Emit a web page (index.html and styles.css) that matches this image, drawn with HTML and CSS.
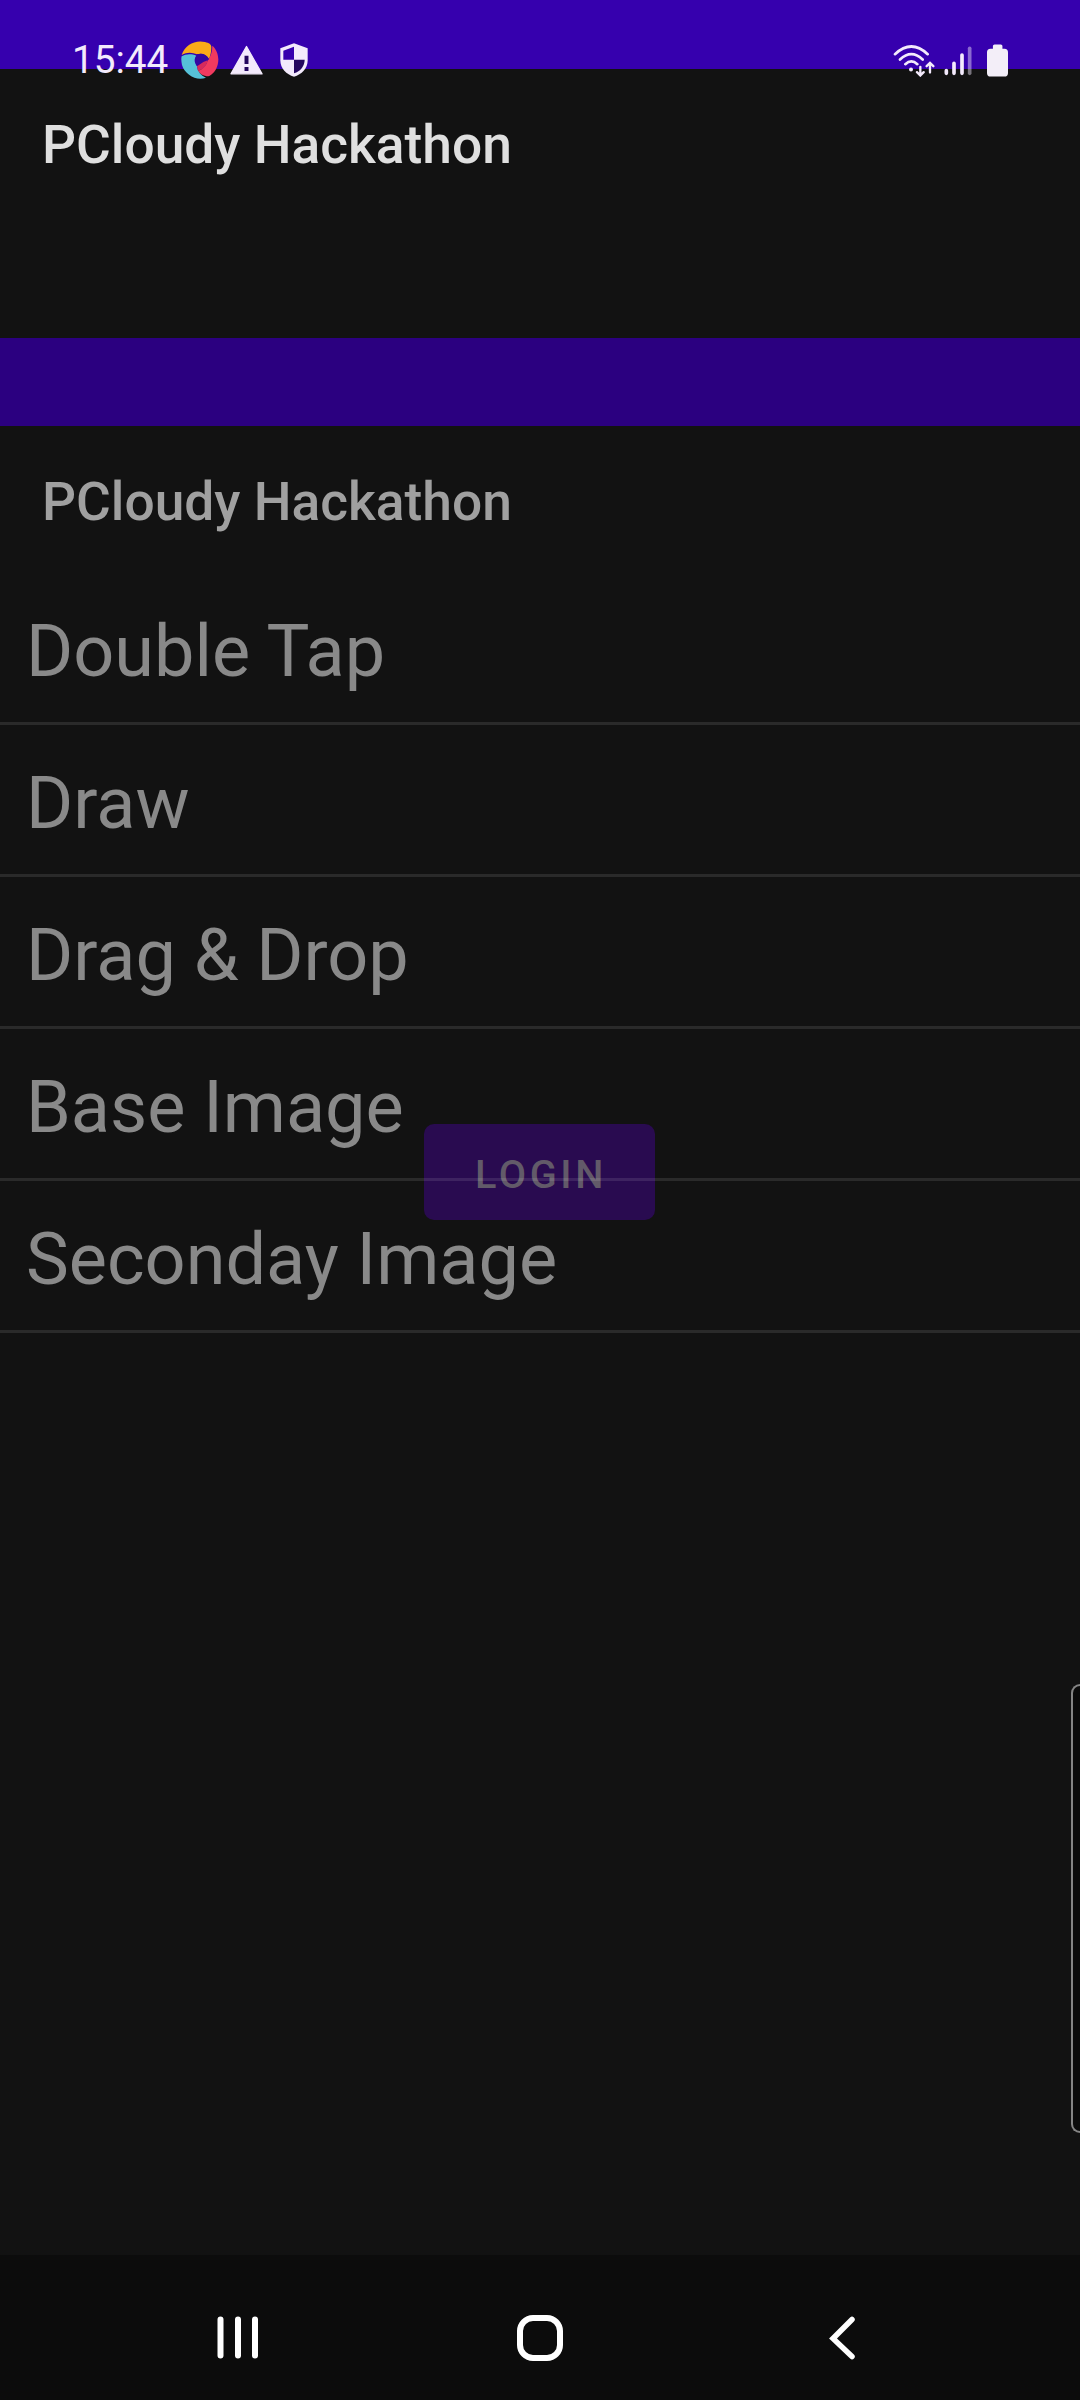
FILE: index.html
```html
<!DOCTYPE html>
<html lang="en">
<head>
<meta charset="utf-8">
<title>PCloudy Hackathon</title>
<link rel="stylesheet" href="styles.css">
</head>
<body>
<div class="screen">
  <div class="status-bar">
    <div class="status-left">
      <span class="clock">15:44</span>
      <svg class="icon-swirl" viewBox="0 0 114 114">
        <path d="M2 42C12 12 42-4 72 3C84 6 91 10 91 18C91 32 89 42 84 54C74 38 62 36 48 40C32 33 16 34 2 42Z" fill="#fbab19"/>
        <path d="M94 14C113 30 118 62 104 86C96 98 86 107 77 106C66 104 56 98 51 90C66 84 76 74 80 58C90 46 94 30 94 14Z" fill="#f03a5f"/>
        <path d="M2 46C14 38 32 38 46 44C38 54 40 66 48 76C50 92 60 104 75 110C47 121 12 102 3 72C1 61 0 53 2 46Z" fill="#56c1d8"/>
        <path d="M48 40C62 36 74 38 84 54L80 59Q65 62 48 76Q38 58 48 40Z" fill="#3408a0"/>
        <path d="M80 58Q64 62 48 76L51 90C66 85 77 75 80 58Z" fill="#d62a5c"/>
      </svg>
      <svg class="icon-warning" viewBox="0 0 100 90">
        <path d="M50 4L97 87H3Z" fill="#f3eafc" stroke="#f3eafc" stroke-width="4" stroke-linejoin="round"/>
        <path d="M44 32h12v25H44zM44 66h12v12H44z" fill="#24075f"/>
      </svg>
      <svg class="icon-shield" viewBox="0 0 84 102">
        <path d="M42 1L83 16V52C83 76 65 95 42 101C19 95 1 76 1 52V16Z" fill="#f3eafc"/>
        <path d="M42 11V50H10V23Z" fill="#3700ae"/>
        <path d="M42 50H74C74 69 61 85 42 91Z" fill="#24075f"/>
      </svg>
    </div>
    <div class="status-right">
      <svg class="icon-wifi" viewBox="0 0 126 98" fill="none" stroke="#f3eafc" stroke-width="8" stroke-linecap="round">
        <path d="M6 30Q55-16 104 30M21 46Q55 14 89 46M37 60Q55 43 73 60"/>
        <circle cx="54" cy="76" r="6" fill="#f3eafc" stroke="none"/>
        <path d="M82 68V92M72 84L82 94L92 84M111 85V58M101 66L111 56L121 66" stroke-width="7"/>
      </svg>
      <svg class="icon-signal" viewBox="0 0 84 90" stroke="#f3eafc" stroke-width="11" stroke-linecap="round">
        <path d="M7 74V82M30 52V82M54 27V82"/>
        <path d="M77 7V82" opacity=".45"/>
      </svg>
      <svg class="icon-battery" viewBox="0 0 64 100" fill="#f3eef8">
        <rect x="18" y="1" width="29" height="24" rx="5"/>
        <rect x="0" y="14" width="64" height="85" rx="11"/>
      </svg>
    </div>
  </div>

  <header class="app-bar">PCloudy Hackathon</header>
  <div class="inner-status"></div>
  <header class="app-bar app-bar-faded">PCloudy Hackathon</header>

  <main class="content">
    <button class="login">LOGIN</button>
    <ul class="menu">
      <li>Double Tap</li>
      <li>Draw</li>
      <li>Drag &amp; Drop</li>
      <li>Base Image</li>
      <li>Seconday Image</li>
    </ul>
  </main>

  <div class="edge-handle"></div>

  <nav class="nav-bar">
    <svg viewBox="0 0 48 48" stroke="#fff" stroke-width="6" stroke-linecap="round">
      <path d="M6.5 5.5V41.5M24 5.5V41.5M41 5.5V41.5"/>
    </svg>
    <svg viewBox="0 0 48 48" fill="none" stroke="#fff" stroke-width="6">
      <rect x="4" y="4" width="40" height="40" rx="13"/>
    </svg>
    <svg viewBox="0 0 48 48" fill="none" stroke="#fff" stroke-width="5.5" stroke-linecap="round">
      <path d="M34 5.5L15 24.5L34 42.5"/>
    </svg>
  </nav>
</div>
</body>
</html>
```
FILE: styles.css
```css
* { box-sizing: border-box; }

body {
  margin: 0;
  background: #121212;
  font-family: Roboto, "Liberation Sans", sans-serif;
}

.screen {
  position: relative;
  display: flex;
  flex-direction: column;
  width: 1080px;
  height: 2400px;
  overflow: hidden;
  background: #121212;
}

/* The status icons hang a few pixels below the coloured band. */
.status-bar {
  display: flex;
  flex: none;
  justify-content: space-between;
  align-items: flex-start;
  height: 69px;
  padding: 41px 72px 0 72px;
  background: #3600ae;
}

.status-left,
.status-right {
  display: flex;
  align-items: center;
  height: 38px;
}

.clock {
  width: 109px;
  font-size: 38.7px;
  line-height: 38px;
  color: #f3eafc;
}

.icon-swirl { width: 38px; height: 38px; }
.icon-warning { width: 33px; height: 30px; margin-left: 11px; }
.icon-shield { width: 28px; height: 34px; margin-left: 17px; }
.icon-wifi { width: 42px; height: 33px; }
.icon-signal { width: 28px; height: 30px; margin: 2px 0 0 9px; }
.icon-battery { width: 21px; height: 33px; margin-left: 15px; }

.app-bar {
  display: flex;
  flex: none;
  align-items: center;
  height: 147px;
  margin-bottom: 122px;
  padding: 4px 42px 0;
  font-size: 53.3px;
  line-height: 62px;
  font-weight: 500;
  color: #dfdfdf;
}

.inner-status {
  flex: none;
  height: 88px;
  background: #2b0080;
}

.app-bar-faded {
  margin-bottom: 0;
  color: #a0a0a0;
}

.content {
  position: relative;
  flex: 1;
}

.menu {
  position: relative;
  margin: 0;
  padding: 0;
  list-style: none;
}

.menu li {
  height: 152px;
  padding: 36px 26px 0;
  border-bottom: 3px solid rgba(255, 255, 255, .1);
  font-size: 72px;
  line-height: 86px;
  color: #898989;
}

/* The previous screen's button shows through behind the list. */
.login {
  position: absolute;
  top: 551px;
  left: 424px;
  width: 231px;
  height: 96px;
  padding: 5px 0 0 3px;
  border: 0;
  border-radius: 10px;
  background: #290b50;
  font: 500 39.7px/46px Roboto, "Liberation Sans", sans-serif;
  letter-spacing: 3.6px;
  color: #625a69;
}

.edge-handle {
  position: absolute;
  top: 1684px;
  right: 0;
  width: 9px;
  height: 449px;
  border: 2px solid #858585;
  border-right: 0;
  border-radius: 9px 0 0 9px;
  background: #0b0b0b;
}

.nav-bar {
  display: flex;
  flex: none;
  justify-content: space-between;
  align-items: flex-start;
  height: 145px;
  padding: 59px 214px 0;
  background: #0c0c0c;
}

.nav-bar svg {
  width: 48px;
  height: 48px;
}
```
